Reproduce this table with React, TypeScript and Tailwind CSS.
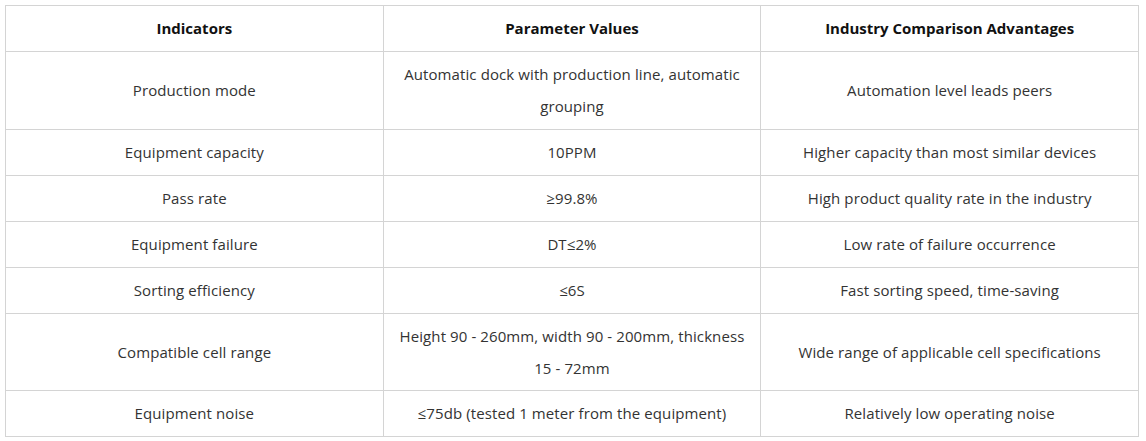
import React from 'react';

const rows: [string, string, string][] = [
  ['Production mode', 'Automatic dock with production line, automatic grouping', 'Automation level leads peers'],
  ['Equipment capacity', '10PPM', 'Higher capacity than most similar devices'],
  ['Pass rate', '≥99.8%', 'High product quality rate in the industry'],
  ['Equipment failure', 'DT≤2%', 'Low rate of failure occurrence'],
  ['Sorting efficiency', '≤6S', 'Fast sorting speed, time-saving'],
  ['Compatible cell range', 'Height 90 - 260mm, width 90 - 200mm, thickness 15 - 72mm', 'Wide range of applicable cell specifications'],
  ['Equipment noise', '≤75db (tested 1 meter from the equipment)', 'Relatively low operating noise'],
];

export default function App() {
  return (
    <div className="bg-white p-[5px] font-['Open_Sans','Noto_Sans',sans-serif] text-[15px] tracking-[0.1px] text-[#333]">
      <table className="w-[1134px] table-fixed border-collapse border border-[#d4d4d4]">
        <thead>
          <tr>
            {['Indicators', 'Parameter Values', 'Industry Comparison Advantages'].map((h) => (
              <th
                key={h}
                className="border border-[#d4d4d4] px-3 pt-[6px] pb-[7px] text-center font-bold leading-[32px] tracking-normal text-[#111]"
              >
                {h}
              </th>
            ))}
          </tr>
        </thead>
        <tbody>
          {rows.map((r, ri) => (
            <tr key={r[0]}>
              {r.map((c, i) => (
                <td
                  key={i}
                  className={
                    ri === 5
                      ? 'border border-[#d4d4d4] px-[14px] pt-[6px] pb-[6px] text-center leading-[32px]'
                      : 'border border-[#d4d4d4] px-[14px] pt-[6px] pb-[7px] text-center leading-[32px]'
                  }
                >
                  {c}
                </td>
              ))}
            </tr>
          ))}
        </tbody>
      </table>
    </div>
  );
}
